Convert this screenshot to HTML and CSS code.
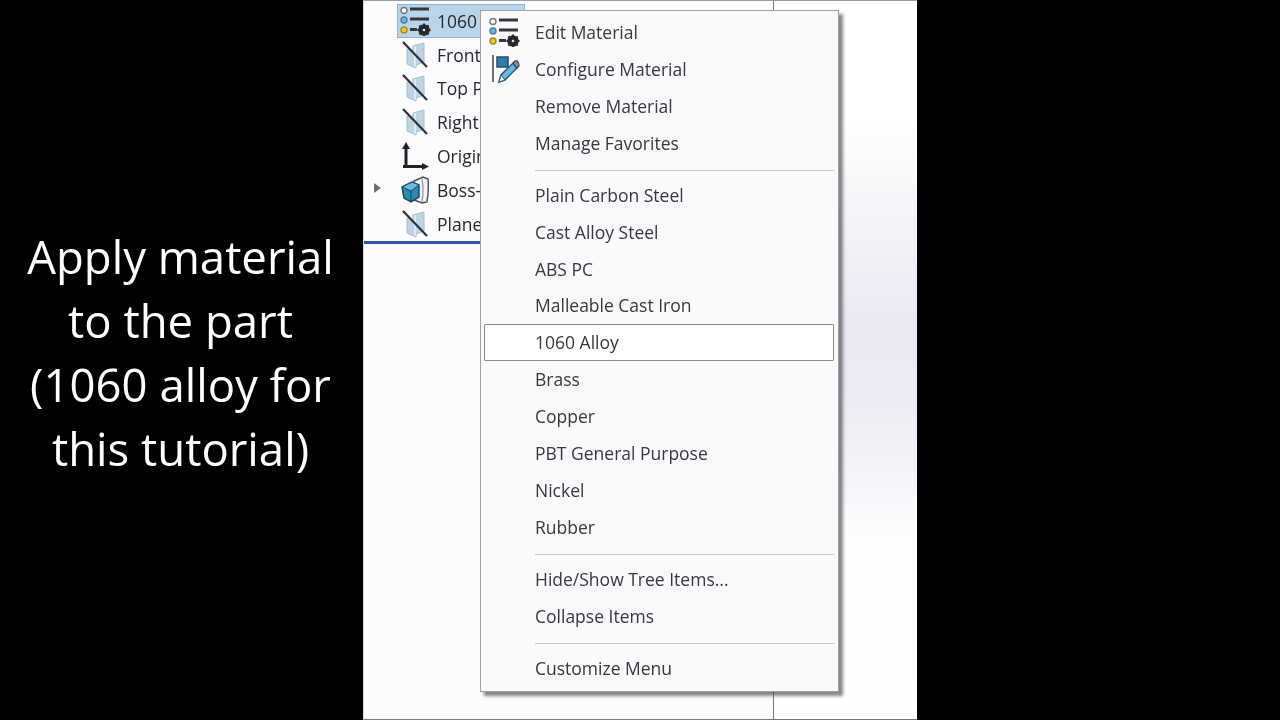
FILE: index.html
```html
<!DOCTYPE html>
<html lang="en">
<head>
<meta charset="utf-8">
<title>Apply material</title>
<link rel="stylesheet" href="styles.css">
</head>
<body>
<svg class="defs" width="0" height="0" aria-hidden="true">
  <defs>
    <symbol id="plane" viewBox="0 0 28 28">
      <path d="M6 8 L12 10 L12 5 L23 2 L23 21 L15 24 L15 27 L6 23 Z" fill="#bdd5e3" stroke="#9fbfd2" stroke-width="1"/>
      <path d="M14 5 L14 26" stroke="#e6eff4" stroke-width="1.6"/>
      <path d="M2 1 L26 26" stroke="#2f3338" stroke-width="2.2" fill="none"/>
    </symbol>
    <symbol id="mat" viewBox="0 0 32 30">
      <circle cx="5" cy="4.5" r="3" fill="#f4f4f4" stroke="#6f7a80" stroke-width="1.4"/>
      <path d="M11 3 H30" stroke="#33363b" stroke-width="3"/>
      <circle cx="5" cy="14" r="3" fill="#6fb4e0" stroke="#4a7d9e" stroke-width="1.4"/>
      <path d="M11 13 H30" stroke="#33363b" stroke-width="3"/>
      <circle cx="5" cy="24" r="3" fill="#f0c92e" stroke="#a58a20" stroke-width="1.4"/>
      <path d="M11 23.5 H18" stroke="#33363b" stroke-width="3"/>
      <circle cx="25" cy="24" r="4" fill="none" stroke="#26282c" stroke-width="3.6"/>
      <path d="M25 17.5 V30 M18.5 24 H31.5 M20.4 19.4 L29.6 28.6 M29.6 19.4 L20.4 28.6" stroke="#26282c" stroke-width="2"/>
      <circle cx="25" cy="24" r="1.3" fill="#ddd"/>
    </symbol>
  </defs>
</svg>

<aside class="caption">
  <p>Apply material<br>to the part<br>(1060 alloy for<br>this tutorial)</p>
</aside>

<main class="window">
  <section class="tree">
    <div class="tree-row selected">
      <svg class="tree-icon mat-icon"><use href="#mat"/></svg>
      <span class="tree-label">1060 Alloy</span>
    </div>
    <div class="tree-row"><svg class="tree-icon"><use href="#plane"/></svg><span class="tree-label">Front Plane</span></div>
    <div class="tree-row"><svg class="tree-icon"><use href="#plane"/></svg><span class="tree-label">Top Plane</span></div>
    <div class="tree-row"><svg class="tree-icon"><use href="#plane"/></svg><span class="tree-label">Right Plane</span></div>
    <div class="tree-row">
      <svg class="tree-icon" viewBox="0 0 28 28">
        <path d="M5 25 V5" stroke="#1f2226" stroke-width="3" fill="none"/>
        <path d="M5 0 L1 7 H9 Z" fill="#1f2226"/>
        <path d="M2 24.5 H24" stroke="#1f2226" stroke-width="3" fill="none"/>
        <path d="M28 24.5 L21 21 V28 Z" fill="#1f2226"/>
      </svg>
      <span class="tree-label">Origin</span>
    </div>
    <div class="tree-row">
      <span class="caret"></span>
      <svg class="tree-icon" viewBox="0 0 28 28">
        <path d="M13 5 L22 1 L27 3 Q28 14 26 26 L21 27 L13 24 Z" fill="#f2f3f4" stroke="#4c4f53" stroke-width="1.4"/>
        <path d="M21 3 Q23 14 21 26" stroke="#8f9296" stroke-width="1.2" fill="none"/>
        <path d="M1 11 L11 6 L18 9 V21 L10 26 L3 22 Z" fill="#2a8ab2" stroke="#1b4a63" stroke-width="1.5"/>
        <path d="M1 11 L10 15 L18 9 L11 6 Z" fill="#68bcd9" stroke="#1b4a63" stroke-width="1"/>
        <path d="M10 15 V26" stroke="#1b4a63" stroke-width="1.2"/>
      </svg>
      <span class="tree-label">Boss-Extrude1</span>
    </div>
    <div class="tree-row"><svg class="tree-icon"><use href="#plane"/></svg><span class="tree-label">Plane1</span></div>
    <div class="rollback"></div>
  </section>
  <section class="view"></section>

  <nav class="menu">
    <div class="group">
      <div class="item">
        <svg class="item-icon"><use href="#mat"/></svg>Edit Material
      </div>
      <div class="item">
        <svg class="item-icon" viewBox="0 0 32 30">
          <path d="M5 2 V29" stroke="#4a4e52" stroke-width="1.6"/>
          <rect x="9" y="4" width="11" height="10" fill="#2d7fa8" stroke="#24506a" stroke-width="1.5"/>
          <path d="M11 29 L13 22 L25 10 L29 15 L17 27 Z" fill="#6db6de" stroke="#2b5a78" stroke-width="1.5"/>
          <path d="M25 10 L27 8 Q29 7 30 9 Q31 11 31 13 L29 15 Z" fill="#8a9298" stroke="#3c4247" stroke-width="1.2"/>
          <path d="M11 29 L13 22 L17 27 Z" fill="#f4f4f4" stroke="#2b5a78" stroke-width="1"/>
        </svg>Configure Material
      </div>
      <div class="item">Remove Material</div>
      <div class="item">Manage Favorites</div>
    </div>
    <div class="sep"></div>
    <div class="group">
      <div class="item">Plain Carbon Steel</div>
      <div class="item">Cast Alloy Steel</div>
      <div class="item">ABS PC</div>
      <div class="item">Malleable Cast Iron</div>
      <div class="item active">1060 Alloy</div>
      <div class="item">Brass</div>
      <div class="item">Copper</div>
      <div class="item">PBT General Purpose</div>
      <div class="item">Nickel</div>
      <div class="item">Rubber</div>
    </div>
    <div class="sep"></div>
    <div class="group">
      <div class="item">Hide/Show Tree Items...</div>
      <div class="item">Collapse Items</div>
    </div>
    <div class="sep"></div>
    <div class="group">
      <div class="item">Customize Menu</div>
    </div>
  </nav>
</main>
</body>
</html>
```

FILE: styles.css
```css
* { box-sizing: border-box; }
html, body { margin: 0; height: 100%; }
body {
  width: 1280px;
  height: 720px;
  overflow: hidden;
  background: #000;
  display: flex;
  font-family: "Open Sans", "Noto Sans", sans-serif;
}
.defs { position: absolute; }
.caption {
  width: 363px;
  padding-top: 224px;
  flex: none;
}
.caption p {
  margin: 0 0 0 -2px;
  color: #fff;
  font-size: 45.5px;
  line-height: 64px;
  text-align: center;
  filter: blur(.35px);
}
.window {
  position: relative;
  width: 554px;
  height: 720px;
  flex: none;
  display: flex;
  background: #fff;
  border-top: 1px solid #9b9b9b;
  border-bottom: 1px solid #777;
  border-left: 1px solid #d8d8d8;
  filter: blur(.35px);
}
.tree {
  width: 410px;
  flex: none;
  height: 100%;
  background: #fcfbfd;
  border-right: 1px solid #777;
  padding: 3px 0 0 33px;
  position: relative;
}
.view {
  flex: 1;
  background: linear-gradient(180deg, #fff 0, #fff 120px, #e9e9f2 320px, #ebebf3 400px, #fdfcfe 530px, #fff 100%);
}
.tree-row {
  width: 128px;
  height: 33.8px;
  position: relative;
  display: flex;
  align-items: center;
  gap: 8px;
  padding-left: 4px;
  font-size: 17.5px;
  color: #25282e;
  white-space: nowrap;
}
.tree-label {
  flex: 1;
  min-width: 0;
  overflow: hidden;
}
.tree-row.selected {
  background: #b9d5ec;
  border: 1px solid #8db2d2;
  padding-left: 1px;
}
.tree-icon { width: 28px; height: 28px; flex: none; }
.mat-icon { width: 32px; height: 30px; margin-right: -2px; }
.caret {
  position: absolute;
  left: -23px;
  top: 10px;
  width: 0;
  height: 0;
  border-left: 7px solid #6b6f73;
  border-top: 5px solid transparent;
  border-bottom: 5px solid transparent;
}
.rollback {
  position: absolute;
  left: 0;
  right: 0;
  top: 240px;
  height: 3px;
  background: #2c58a8;
}
.menu {
  position: absolute;
  left: 116px;
  top: 9px;
  width: 359px;
  height: 682px;
  padding: 2.5px 4px 0 3px;
  background: #fbf9fc;
  border: 1px solid #a0a0a2;
  box-shadow: 4px 4px 3px rgba(70, 70, 72, .65);
  color: #36393f;
  font-size: 17.5px;
}
.item {
  position: relative;
  height: 36.9px;
  display: flex;
  align-items: center;
  padding-left: 51px;
  white-space: nowrap;
}
.item-icon {
  position: absolute;
  left: 4px;
  top: 3px;
  width: 32px;
  height: 30px;
}
.item.active {
  background: #fff;
  outline: 1px solid #8a8a8a;
  outline-offset: -1px;
  border-radius: 1px;
}
.sep {
  height: 15.3px;
  margin-left: 51px;
  padding-top: 8.5px;
}
.sep::before {
  content: "";
  display: block;
  height: 1px;
  background: #c4c3c6;
}
```
